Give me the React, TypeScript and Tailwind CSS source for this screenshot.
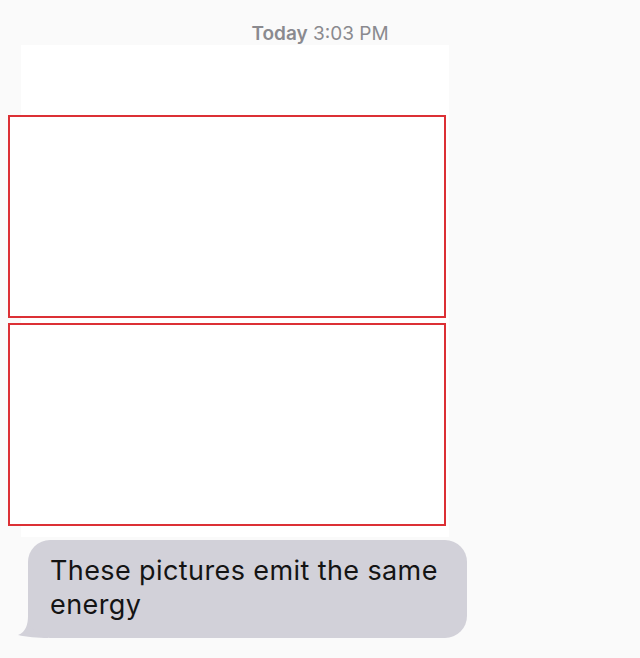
export default function App() {
  return (
    <div className="w-[640px] h-[658px] bg-[#fafafa] overflow-hidden font-['Inter','Liberation_Sans',Arial,sans-serif]">
      {/* Timestamp */}
      <div className="pt-[22px] h-[45px] text-center text-[19px] leading-[23px] text-[#8a8a8f]">
        <span className="font-semibold">Today</span> 3:03 PM
      </div>

      {/* Screenshot area with the two marked boxes */}
      <div className="ml-[21px] w-[428px] h-[492px] bg-white pt-[70px]">
        <div className="-ml-[13px] flex flex-col gap-[5px]">
          <div className="w-[438px] h-[203px] border-2 border-[#dc3035] bg-white" />
          <div className="w-[438px] h-[203px] border-2 border-[#dc3035] bg-white" />
        </div>
      </div>

      {/* Message bubble */}
      <div className="relative ml-[28px] mt-[3px] w-[439px]">
        <svg
          className="absolute left-[-10px] bottom-0"
          width="30"
          height="22"
          viewBox="0 0 30 22"
        >
          <path d="M30 0 L30 22 C20 22 8 21 0 19 C8 16 10 8 10 0 Z" fill="#d2d1d9" />
        </svg>
        <div className="relative rounded-[22px] bg-[#d2d1d9] pl-[22px] pr-[10px] pt-[14px] pb-[16px] text-[27px] leading-[34px] tracking-[0.4px] text-[#141414]">
          These pictures emit the same energy
        </div>
      </div>
    </div>
  )
}
